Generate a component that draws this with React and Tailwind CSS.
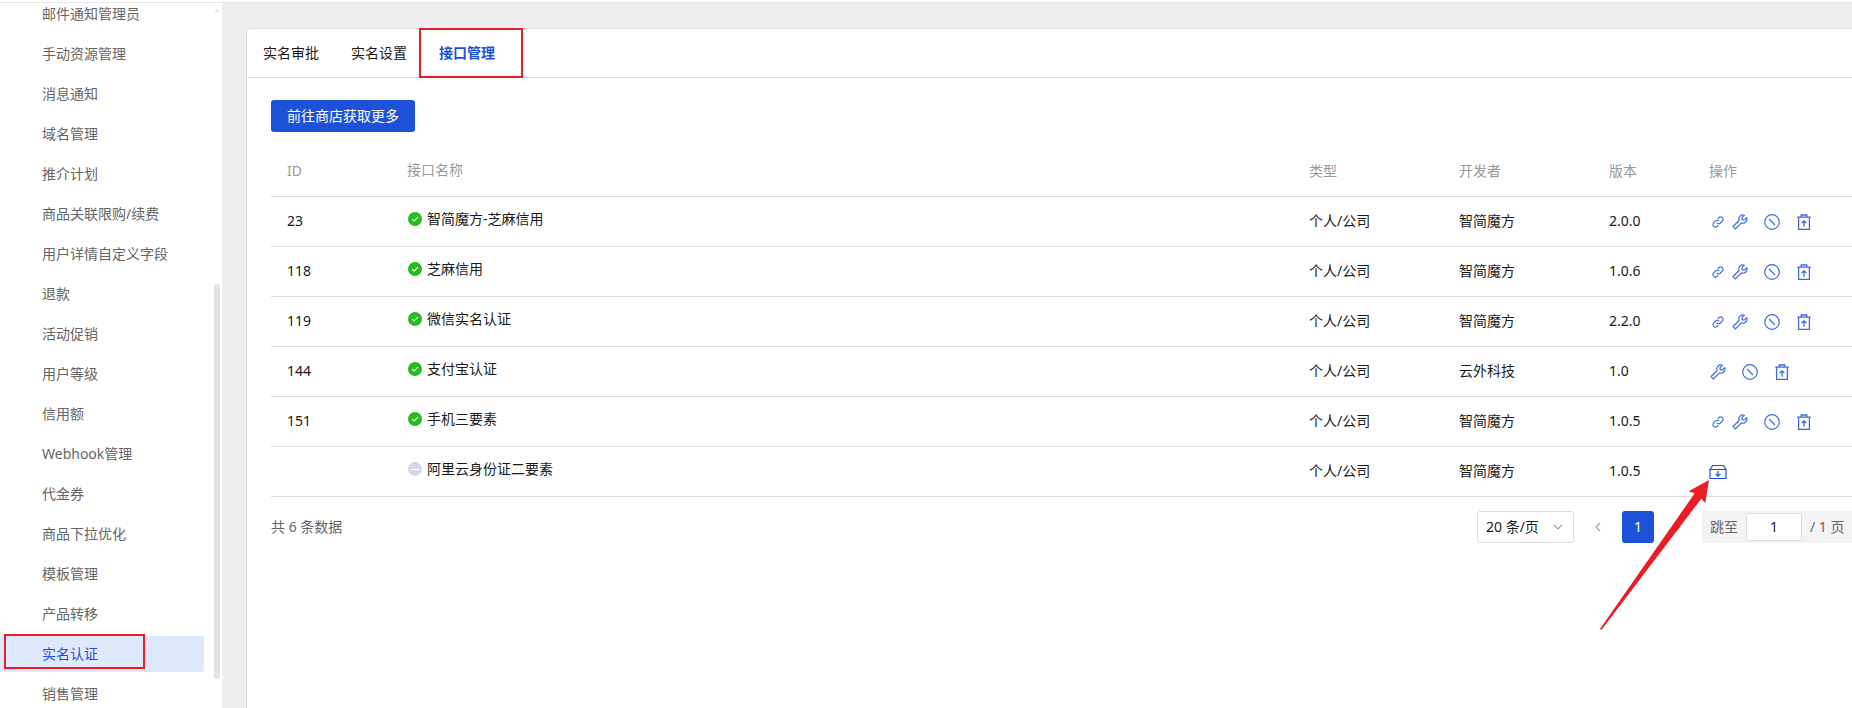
import React from 'react';

const menuItems = [
  '邮件通知管理员',
  '手动资源管理',
  '消息通知',
  '域名管理',
  '推介计划',
  '商品关联限购/续费',
  '用户详情自定义字段',
  '退款',
  '活动促销',
  '用户等级',
  '信用额',
  'Webhook管理',
  '代金券',
  '商品下拉优化',
  '模板管理',
  '产品转移',
  '实名认证',
  '销售管理',
];

const tabs = ['实名审批', '实名设置', '接口管理'];

const rows = [
  { id: 23, name: '智简魔方-芝麻信用', type: '个人/公司', author: '智简魔方', version: '2.0.0', installed: true, link: true },
  { id: 118, name: '芝麻信用', type: '个人/公司', author: '智简魔方', version: '1.0.6', installed: true, link: true },
  { id: 119, name: '微信实名认证', type: '个人/公司', author: '智简魔方', version: '2.2.0', installed: true, link: true },
  { id: 144, name: '支付宝认证', type: '个人/公司', author: '云外科技', version: '1.0', installed: true, link: false },
  { id: 151, name: '手机三要素', type: '个人/公司', author: '智简魔方', version: '1.0.5', installed: true, link: true },
  { id: '', name: '阿里云身份证二要素', type: '个人/公司', author: '智简魔方', version: '1.0.5', installed: false, link: false },
];

const LinkIcon = () => (
  <svg className="size-3" viewBox="0 0 24 24" fill="none" stroke="currentColor" strokeWidth="2.2">
    <path d="M9.6 13.6a5 5 0 0 0 7.4.4l4-4a5 5 0 0 0-7-7l-2.6 2.6" />
    <path d="M14.4 10.4a5 5 0 0 0-7.4-.4l-4 4a5 5 0 0 0 7 7l2.6-2.6" />
  </svg>
);

const WrenchIcon = () => (
  <svg className="size-4" viewBox="0 0 16 16" fill="none" stroke="currentColor" strokeWidth="1.2">
    <path d="M12.3 1.3a4 4 0 0 0-5.2 5.2L1 12.6 3.4 15l6.1-6.1a4 4 0 0 0 5.2-5.2l-2.4 2.4-2-.4-.4-2z" />
  </svg>
);

const DisableIcon = () => (
  <svg className="size-4" viewBox="0 0 16 16" fill="none" stroke="currentColor" strokeWidth="1.2">
    <circle cx="8" cy="8" r="7.3" />
    <path d="m5 5 6 6" />
  </svg>
);

const UninstallIcon = () => (
  <svg className="size-4" viewBox="0 0 16 16" fill="none" stroke="currentColor" strokeWidth="1.3">
    <path d="M1.2 3.2h13.6M5.2 3.2V1h5.6v2.2M2.6 3.2v12.1h10.8V3.2" />
    <path d="M8 12.8V7M5.6 9 8 6.8 10.4 9" />
  </svg>
);

const InstallIcon = () => (
  <svg className="h-4 w-[18px]" viewBox="0 0 18 16" fill="none" stroke="currentColor" strokeWidth="1.2">
    <path d="M1 5.5h16M1 5.5v9h16v-9l-2.6-4H3.6z" />
    <path d="M9 7v5M6.6 9.8 9 12.2l2.4-2.4" />
  </svg>
);

const StatusIcon = ({ installed }) => (
  <svg className="size-3.5" viewBox="0 0 14 14" fill="none" stroke="#fff">
    <circle cx="7" cy="7" r="7" stroke="none" fill={installed ? '#26bb20' : '#d3d8e2'} />
    {installed ? <path d="m4.2 7.1 2 1.9 3.8-3.8" strokeWidth="1.1" /> : <path d="M2.5 7.5h9" strokeWidth="1" />}
  </svg>
);

const Chevron = ({ d }) => (
  <svg className="size-4" viewBox="0 0 16 16" fill="none" stroke="currentColor" strokeWidth="1.2">
    <path d={d} />
  </svg>
);

const PointerArrow = () => (
  <svg className="pointer-events-none absolute right-0 top-0 z-10 h-[152px] w-[112px]" viewBox="0 0 112 152">
    <path d="M110 2 89.7 13.3l6 2L1 151l1.4 1L102.3 20.7l4 4.3z" fill="#ed1c24" />
  </svg>
);

const Sidebar = () => (
  <aside className="flex w-[222px] shrink-0 overflow-hidden bg-white">
    <nav className="-mt-[7px] w-[204px]">
      {menuItems.map((item) => (
        <a
          key={item}
          href="#"
          className={
            item === '实名认证'
              ? 'relative mb-1 block h-9 rounded-r-[3px] bg-[#dfe9fd] pl-[42px] leading-[35px] text-[#1d52d8]'
              : 'mb-1 block h-9 pl-[42px] leading-[35px] text-[#666]'
          }
        >
          {item}
          {item === '实名认证' && (
            <span className="absolute -top-0.5 left-1 h-[35px] w-[141px] border-2 border-[#ed1c24]" />
          )}
        </a>
      ))}
    </nav>
    <div className="ml-2.5 flex w-1.5 flex-col pt-1.5">
      <svg className="h-[3px] w-1.5" viewBox="0 0 6 3">
        <path d="M3 0 6 3H0z" fill="#e3e3e3" />
      </svg>
      <span className="mt-[272px] h-[395px] shrink-0 rounded-full bg-[#e3e3e3]" />
    </div>
  </aside>
);

const App = () => {
  return (
    <div className="flex h-screen flex-col overflow-hidden bg-white pt-0.5 font-['Noto_Sans','Noto_Sans_CJK_SC',sans-serif] text-sm text-[#1a1a1a]">
      <div className="flex min-h-0 flex-1 border-t border-[#e7e7e7]">
        <Sidebar />
        <main className="flex min-w-0 flex-1 bg-[#eee] pl-6 pt-[25px]">
          <section className="min-w-0 flex-1 rounded-tl-[5px] border-l border-t border-[#dcdcdc] bg-white">
            {/* 选项卡 */}
            <div className="flex h-[49px] border-b border-[#dcdcdc]">
              {tabs.map((tab) => (
                <button
                  key={tab}
                  type="button"
                  className={
                    tab === '接口管理'
                      ? 'relative px-4 font-bold text-[#1d52d8]'
                      : 'relative px-4'
                  }
                >
                  {tab}
                  {tab === '接口管理' && (
                    <span className="absolute -left-1 -top-px h-[50px] w-[104px] border-2 border-[#ed1c24]" />
                  )}
                </button>
              ))}
            </div>

            <div className="pl-6 pt-[22px]">
              <button type="button" className="h-8 rounded-[3px] bg-[#1d52d8] px-4 text-white">
                前往商店获取更多
              </button>

              <table className="mt-3.5 w-full table-fixed text-left">
                <thead>
                  <tr className="h-[50px] border-b border-[#dcdcdc] text-[#999]">
                    <th className="w-[120px] pl-4 font-normal">ID</th>
                    <th className="pb-0.5 pl-4 font-normal">接口名称</th>
                    <th className="w-[150px] pl-4 font-normal">类型</th>
                    <th className="w-[150px] pl-4 font-normal">开发者</th>
                    <th className="w-[100px] pl-4 font-normal">版本</th>
                    <th className="w-[159px] pl-4 font-normal">操作</th>
                  </tr>
                </thead>
                <tbody>
                  {rows.map((row) => (
                    <tr key={row.name} className="h-[50px] border-b border-[#dcdcdc]">
                      <td className="pl-4">{row.id}</td>
                      <td className="pl-[17px]">
                        <div className="flex items-center gap-[5px] pb-1">
                          <StatusIcon installed={row.installed} />
                          {row.name}
                        </div>
                      </td>
                      <td className="pl-4">{row.type}</td>
                      <td className="pl-4">{row.author}</td>
                      <td className="pl-4">{row.version}</td>
                      <td className="pl-4 text-[#1d52d8]">
                        {row.installed ? (
                          <div className="flex items-center gap-4 pt-0.5 opacity-85">
                            <div className="flex items-center gap-2 pl-px">
                              {row.link && (
                                <button type="button" aria-label="链接" className="ml-0.5"><LinkIcon /></button>
                              )}
                              <button type="button" aria-label="配置"><WrenchIcon /></button>
                            </div>
                            <button type="button" aria-label="停用"><DisableIcon /></button>
                            <button type="button" aria-label="卸载"><UninstallIcon /></button>
                          </div>
                        ) : (
                          <div className="relative flex w-[18px] pt-0.5">
                            <button type="button" aria-label="安装"><InstallIcon /></button>
                            <span className="absolute right-4 top-4">
                              <PointerArrow />
                            </span>
                          </div>
                        )}
                      </td>
                    </tr>
                  ))}
                </tbody>
              </table>

              {/* 分页 */}
              <div className="mt-3.5 flex h-8 items-center">
                <span className="flex-1 text-[#666]">共 6 条数据</span>
                <div className="relative text-[#a6a6a6]">
                  <select
                    aria-label="每页条数"
                    className="h-8 w-[97px] appearance-none rounded-[3px] border border-[#dcdcdc] bg-white pl-2 text-[#1a1a1a]"
                  >
                    <option>20 条/页</option>
                  </select>
                  <span className="pointer-events-none absolute right-2 top-2">
                    <Chevron d="m4 6 4 4 4-4" />
                  </span>
                </div>
                <button type="button" aria-label="上一页" className="mx-4 text-[#a6a6a6]">
                  <Chevron d="m10 4-4 4 4 4" />
                </button>
                <button type="button" className="size-8 rounded-[3px] bg-[#1d52d8] text-white">1</button>
                <button type="button" aria-label="下一页" className="mx-4 text-[#a6a6a6]">
                  <Chevron d="m6 4 4 4-4 4" />
                </button>
                <label className="flex h-8 w-[150px] items-center gap-2 rounded-l-[3px] bg-[#f3f3f3] pl-2 text-[#666]">
                  跳至
                  <input
                    type="text"
                    defaultValue="1"
                    className="h-7 w-14 rounded-[3px] border border-[#dcdcdc] bg-white text-center text-[#1a1a1a]"
                  />
                  / 1 页
                </label>
              </div>
            </div>
          </section>
        </main>
      </div>
    </div>
  );
};

export default App;
